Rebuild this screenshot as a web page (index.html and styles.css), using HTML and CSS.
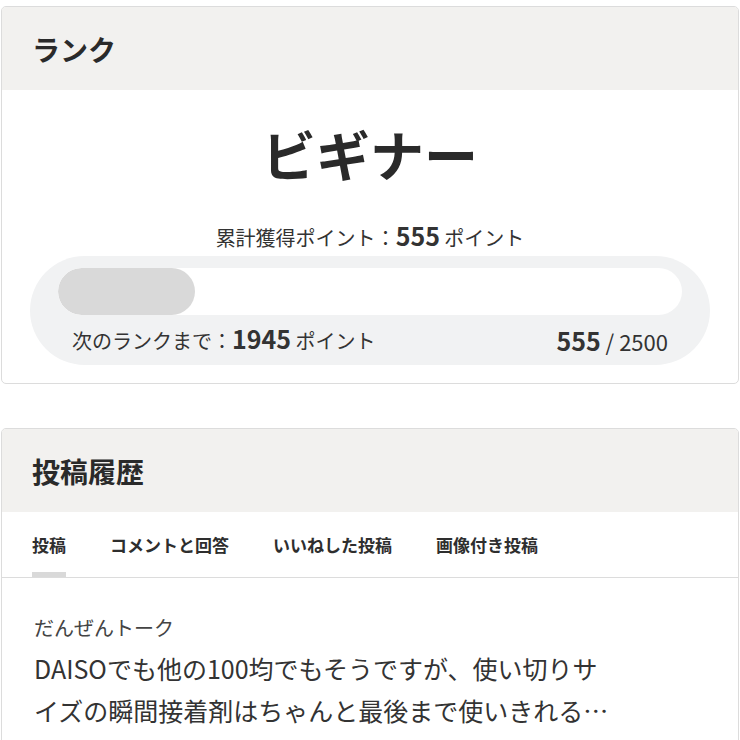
FILE: index.html
```html
<!DOCTYPE html>
<html lang="ja">
<head>
<meta charset="utf-8">
<link rel="stylesheet" href="styles.css">
</head>
<body>
<div class="page">
  <section class="card">
    <header class="card-head"><h2 class="card-title">ランク</h2></header>
    <div class="rank-body">
      <div class="rank-name">ビギナー</div>
      <div class="total">累計獲得ポイント：<strong class="num">555</strong> ポイント</div>
      <div class="progress">
        <div class="bar"><div class="fill" style="width:22%"></div></div>
        <div class="progress-info">
          <span class="next">次のランクまで：<strong class="num">1945</strong> ポイント</span>
          <span class="ratio"><strong class="num">555</strong> / 2500</span>
        </div>
      </div>
    </div>
  </section>

  <section class="card">
    <header class="card-head"><h2 class="card-title">投稿履歴</h2></header>
    <nav class="tabs">
      <span class="tab active">投稿</span>
      <span class="tab">コメントと回答</span>
      <span class="tab">いいねした投稿</span>
      <span class="tab">画像付き投稿</span>
    </nav>
    <article class="post">
      <div class="post-cat">だんぜんトーク</div>
      <p class="post-text">DAISOでも他の100均でもそうですが、使い切りサイズの瞬間接着剤はちゃんと最後まで使いきれるかどうか、いつも悩みます。</p>
    </article>
  </section>
</div>
</body>
</html>
```

FILE: styles.css
```css
* { box-sizing: border-box; }
html, body { margin: 0; padding: 0; background: #fff; }
body {
  font-family: "Noto Sans CJK JP", "Noto Sans", sans-serif;
  color: #2e2e2e;
}
.page {
  padding: 6px 1px 0;
  display: flex;
  flex-direction: column;
  gap: 44px;
}
.card {
  border: 1px solid #dcdcdc;
  border-radius: 5px;
  overflow: hidden;
  background: #fff;
}
.card-head {
  background: #f2f1ef;
  height: 83px;
  display: flex;
  align-items: center;
  padding-left: 30px;
}
.card-title {
  margin: 0;
  font-size: 28px;
  font-weight: 700;
  line-height: 1;
  color: #2a2a2a;
}
.rank-body {
  padding: 22px 28px 18px;
  display: flex;
  flex-direction: column;
  align-items: stretch;
}
.rank-name {
  text-align: center;
  font-size: 54px;
  font-weight: 700;
  line-height: 84px;
  height: 84px;
  color: #2a2a2a;
}
.total {
  margin-top: 27px;
  height: 30px;
  text-align: center;
  font-size: 20px;
  line-height: 30px;
  color: #333;
}
.num {
  font-weight: 700;
  font-size: 25px;
  line-height: 1;
}
.progress {
  margin-top: 3px;
  background: #f1f2f3;
  border-radius: 55px;
  padding: 12px 28px 8px;
}
.bar {
  height: 47px;
  background: #fff;
  border-radius: 24px;
  overflow: hidden;
}
.fill {
  height: 100%;
  background: #d9d9d9;
  border-radius: 24px;
}
.progress-info {
  margin-top: 10px;
  height: 32px;
  padding: 0 14px;
  display: flex;
  justify-content: space-between;
  align-items: center;
  font-size: 20px;
  line-height: 32px;
  color: #333;
}
.ratio { font-size: 22px; }
.tabs {
  display: flex;
  gap: 44px;
  padding: 0 30px;
  border-bottom: 1px solid #dcdcdc;
}
.tab {
  font-size: 17px;
  font-weight: 700;
  line-height: 25px;
  padding: 20px 0 15px;
  border-bottom: 5px solid transparent;
  color: #2e2e2e;
}
.tab.active { border-bottom-color: #d9d9d9; }
.post {
  padding: 35px 32px 20px;
}
.post-cat {
  font-size: 20px;
  line-height: 30px;
  color: #444;
}
.post-text {
  margin: 4px 0 0;
  max-width: 580px;
  font-size: 25px;
  line-height: 42px;
  color: #333;
  display: -webkit-box;
  -webkit-line-clamp: 2;
  -webkit-box-orient: vertical;
  overflow: hidden;
}
```
